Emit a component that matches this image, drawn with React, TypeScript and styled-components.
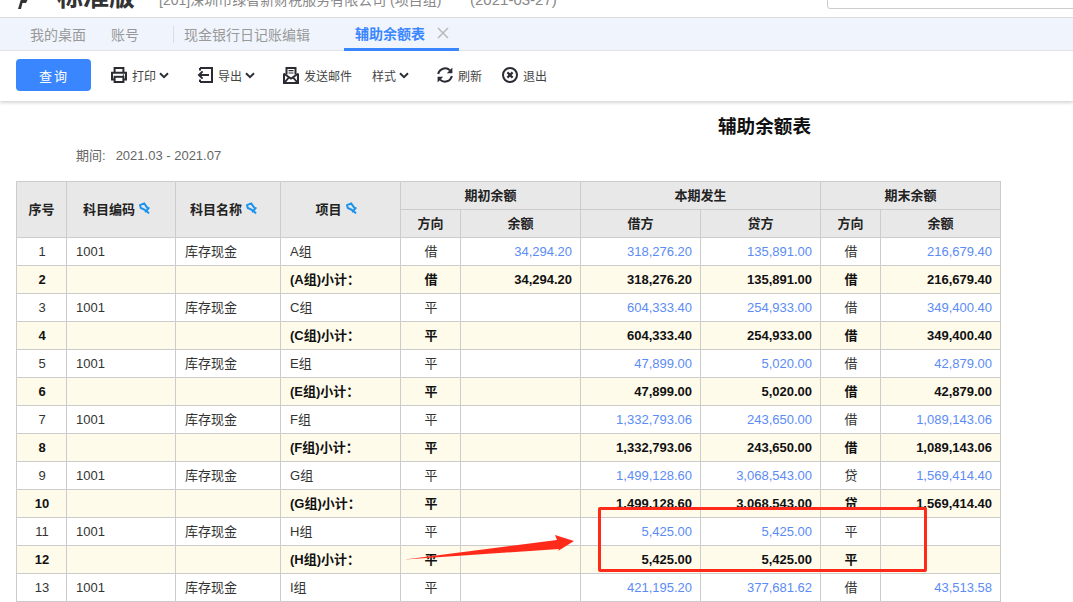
import { FC, ReactNode } from "react";
import styled, { createGlobalStyle } from "styled-components";

const FONT = `"Liberation Sans", "Noto Sans CJK SC", sans-serif`;

interface IRow {
  group: string;
  dir: string;
  open: string;
  debit: string;
  credit: string;
  endDir: string;
  end: string;
}

const ROWS: IRow[] = [
  { group: "A", dir: "借", open: "34,294.20", debit: "318,276.20", credit: "135,891.00", endDir: "借", end: "216,679.40" },
  { group: "C", dir: "平", open: "", debit: "604,333.40", credit: "254,933.00", endDir: "借", end: "349,400.40" },
  { group: "E", dir: "平", open: "", debit: "47,899.00", credit: "5,020.00", endDir: "借", end: "42,879.00" },
  { group: "F", dir: "平", open: "", debit: "1,332,793.06", credit: "243,650.00", endDir: "借", end: "1,089,143.06" },
  { group: "G", dir: "平", open: "", debit: "1,499,128.60", credit: "3,068,543.00", endDir: "贷", end: "1,569,414.40" },
  { group: "H", dir: "平", open: "", debit: "5,425.00", credit: "5,425.00", endDir: "平", end: "" },
];

const COL_WIDTHS = [50, 109, 105, 120, 60, 120, 120, 120, 60, 120];

const Chevron = () => (
  <svg width="10" height="7" viewBox="0 0 10 7" fill="none">
    <path d="M1 1.2 5 5.2 9 1.2" stroke="#2b3038" strokeWidth="2" />
  </svg>
);

const PrintIcon = () => (
  <svg width="16" height="16" viewBox="0 0 16 16" fill="none" stroke="#2b2b33" strokeWidth="2">
    <path d="M3.6 6V1h8.8v5" />
    <path d="M3.5 12.5H1V5.8h14v6.7h-2.5" />
    <rect x="3.6" y="9.8" width="8.8" height="5.2" fill="#fff" />
    <circle cx="12.4" cy="8" r="0.8" fill="#2b2b33" stroke="none" />
  </svg>
);

const ExportIcon = () => (
  <svg width="16" height="16" viewBox="0 0 16 16" fill="none" stroke="#2b2b33" strokeWidth="2">
    <path d="M3 1h12v14H3M3 12.4V15M3 1v2.6" />
    <path d="M12 8H2M5.6 4.4 2 8l3.6 3.6" />
  </svg>
);

const MailIcon = () => (
  <svg width="16" height="17" viewBox="0 0 16 17" fill="none" stroke="#2b2b33" strokeWidth="2">
    <path d="M3.5 7.5V1h9v6.5" />
    <path d="M5.5 3.7h5M5.5 6h5" strokeWidth="1.2" />
    <path d="M1 6.5V16h14V6.5" />
    <path d="M1 6.8 8 11.6l7-4.8M1.4 15.6 6 10.4M14.6 15.6 10 10.4" strokeWidth="1.8" />
  </svg>
);

const RefreshIcon = () => (
  <svg width="16" height="18" viewBox="0 0 16 18" fill="none" stroke="#2b2b33" strokeWidth="2">
    <path d="M1.2 8A7 7 0 0 1 13 4.4" />
    <path d="M14.8 10A7 7 0 0 1 3 13.6" />
    <path d="M15.4 1.6v5.6H9.8z" fill="#2b2b33" stroke="none" />
    <path d="M.6 16.4v-5.6h5.6z" fill="#2b2b33" stroke="none" />
  </svg>
);

const QuitIcon = () => (
  <svg width="16" height="16" viewBox="0 0 16 16" fill="none" stroke="#2b2b33">
    <circle cx="8" cy="8" r="7" strokeWidth="2" />
    <path d="M5.4 5.4l5.2 5.2M10.6 5.4l-5.2 5.2" strokeWidth="2.2" />
  </svg>
);

const PinIcon = () => (
  <svg width="11" height="12" viewBox="0 0 11 12" fill="none" stroke="#1c93ec" strokeWidth="2">
    <path d="M1 3.2 5.2 1.4l3 4.2 1.4.6-2.8 3.2-1-1.6L1.8 6z" />
    <path d="M7.6 9 10 11.4" />
  </svg>
);

const ToolItem: FC<{ icon?: ReactNode; label: string; menu?: boolean }> = ({ icon, label, menu }) => (
  <Tool $menu={menu}>
    {icon}
    <span>{label}</span>
    {menu && <Chevron />}
  </Tool>
);

const DataRows: FC<{ row: IRow; index: number }> = ({ row, index }) => (
  <>
    <tr>
      <Td $align="center">{index * 2 + 1}</Td>
      <Td>1001</Td>
      <Td $cjk>库存现金</Td>
      <Td $cjk>{row.group}组</Td>
      <Td $cjk $align="center">{row.dir}</Td>
      <Td $align="right" $link>{row.open}</Td>
      <Td $align="right" $link>{row.debit}</Td>
      <Td $align="right" $link>{row.credit}</Td>
      <Td $cjk $align="center">{row.endDir}</Td>
      <Td $align="right" $link>{row.end}</Td>
    </tr>
    <SubtotalRow>
      <Td $align="center">{index * 2 + 2}</Td>
      <Td />
      <Td />
      <Td $cjk>({row.group}组)小计：</Td>
      <Td $cjk $align="center">{row.dir}</Td>
      <Td $align="right">{row.open}</Td>
      <Td $align="right">{row.debit}</Td>
      <Td $align="right">{row.credit}</Td>
      <Td $cjk $align="center">{row.endDir}</Td>
      <Td $align="right">{row.end}</Td>
    </SubtotalRow>
  </>
);

const App: FC = () => {
  return (
    <Page>
      <GlobalStyle />
      <TopBar>
        <Logo width="10" height="10" viewBox="0 0 10 10">
          <path d="M3 0h7L8 4H4.5L3 10H0z" fill="#333" />
        </Logo>
        <Brand>标准版</Brand>
        <Company>[201]深圳市绿智新财税服务有限公司 (项目组)</Company>
        <DateText>(2021-03-27)</DateText>
        <SearchBox />
      </TopBar>

      <Tabs>
        <Tab $tail={14}>我的桌面</Tab>
        <Tab $tail={34}>账号</Tab>
        <Tab $tail={34}>现金银行日记账编辑</Tab>
        <Tab $active $tail={10}>
          辅助余额表
          <TabClose viewBox="0 0 12 12">
            <path d="M1 1l10 10M11 1 1 11" stroke="#bbb" strokeWidth="1.6" />
          </TabClose>
        </Tab>
      </Tabs>

      <Toolbar>
        <QueryButton>查询</QueryButton>
        <ToolItem icon={<PrintIcon />} label="打印" menu />
        <ToolItem icon={<ExportIcon />} label="导出" menu />
        <ToolItem icon={<MailIcon />} label="发送邮件" />
        <ToolItem label="样式" menu />
        <ToolItem icon={<RefreshIcon />} label="刷新" />
        <ToolItem icon={<QuitIcon />} label="退出" />
      </Toolbar>

      <Report>
        <Title>辅助余额表</Title>
        <Period>
          <span>期间:</span>
          <span>2021.03 - 2021.07</span>
        </Period>
        <Table>
          <colgroup>
            {COL_WIDTHS.map((w, i) => (
              <col key={i} width={w} />
            ))}
          </colgroup>
          <thead>
            <tr>
              <Th rowSpan={2}>序号</Th>
              <Th rowSpan={2}>
                <HeadLabel>科目编码<PinIcon /></HeadLabel>
              </Th>
              <Th rowSpan={2}>
                <HeadLabel>科目名称<PinIcon /></HeadLabel>
              </Th>
              <Th rowSpan={2}>
                <HeadLabel>项目<PinIcon /></HeadLabel>
              </Th>
              <Th colSpan={2}>期初余额</Th>
              <Th colSpan={2}>本期发生</Th>
              <Th colSpan={2}>期末余额</Th>
            </tr>
            <tr>
              <Th>方向</Th>
              <Th>余额</Th>
              <Th>借方</Th>
              <Th>贷方</Th>
              <Th>方向</Th>
              <Th>余额</Th>
            </tr>
          </thead>
          <tbody>
            {ROWS.map((row, i) => (
              <DataRows key={row.group} row={row} index={i} />
            ))}
            <tr>
              <Td $align="center">13</Td>
              <Td>1001</Td>
              <Td $cjk>库存现金</Td>
              <Td $cjk>I组</Td>
              <Td $cjk $align="center">平</Td>
              <Td $align="right" $link></Td>
              <Td $align="right" $link>421,195.20</Td>
              <Td $align="right" $link>377,681.62</Td>
              <Td $cjk $align="center">借</Td>
              <Td $align="right" $link>43,513.58</Td>
            </tr>
          </tbody>
        </Table>
      </Report>

      {/* 截图上的红色标注 */}
      <MarkBox />
      <MarkArrow width="172" height="28" viewBox="0 0 172 28">
        <path d="M0 25.5 152 6 150 1 169 7 153 17 154 15z" fill="#ff2a1a" />
      </MarkArrow>
    </Page>
  );
};

const GlobalStyle = createGlobalStyle`
  html, body {
    margin: 0;
    padding: 0;
    background: #fff;
    overflow: hidden;
  }
  * {
    box-sizing: border-box;
  }
`;

const Page = styled.div`
  position: relative;
  width: 1073px;
  height: 602px;
  overflow: hidden;
  font-family: ${FONT};
  font-size: 13px;
  color: #333;
`;

const TopBar = styled.div`
  display: flex;
  align-items: flex-end;
  height: 18px;
  padding-left: 18px;
  border-bottom: 1px solid #dcdcdc;
  overflow: hidden;
  background: #fff;
`;

const Logo = styled.svg`
  flex: none;
  margin-bottom: 8px;
`;

const Brand = styled.div`
  flex: none;
  margin: 0 24px 5px 29px;
  font-size: 26px;
  line-height: 30px;
  font-weight: 700;
  color: #333;
`;

const Company = styled.div`
  flex: none;
  width: 311px;
  margin-bottom: 7px;
  font-size: 14px;
  line-height: 20px;
  color: #888;
  white-space: nowrap;
`;

const DateText = styled.div`
  flex: none;
  margin-bottom: 7px;
  font-size: 15px;
  line-height: 20px;
  color: #888;
`;

const SearchBox = styled.div`
  flex: none;
  width: 266px;
  height: 24px;
  margin: 0 -20px 8px auto;
  border: 1px solid #ccc;
  border-radius: 3px;
`;

const Tabs = styled.div`
  display: flex;
  align-items: stretch;
  height: 33px;
  padding-left: 19px;
  background: #f0f5fd;
  border-bottom: 1px solid #e2e6ec;
`;

const Tab = styled.div<{ $active?: boolean; $tail: number }>`
  position: relative;
  display: flex;
  align-items: center;
  height: ${(p) => (p.$active ? "33px" : "32px")};
  padding: 0 ${(p) => p.$tail}px 0 11px;
  font-size: 14px;
  font-weight: ${(p) => (p.$active ? 700 : 400)};
  color: ${(p) => (p.$active ? "#3a86ff" : "#999")};
  border-bottom: ${(p) => (p.$active ? "3px solid #3a86ff" : "0")};

  & + &::before {
    content: "";
    position: absolute;
    left: 0;
    top: 8px;
    width: 1px;
    height: 17px;
    background: #d8dde6;
  }
`;

const TabClose = styled.svg`
  width: 12px;
  height: 12px;
  margin-left: 12px;
`;

const Toolbar = styled.div`
  display: flex;
  align-items: center;
  gap: 20px;
  height: 50px;
  padding: 0 0 2px 16px;
  background: #fff;
  box-shadow: 0 2px 3px rgba(0, 0, 0, 0.16);
`;

const QueryButton = styled.button`
  width: 75px;
  height: 32px;
  padding: 0 0 0 1px;
  border: 0;
  border-radius: 4px;
  background: #3a86ff;
  color: #fff;
  font-family: ${FONT};
  font-size: 13px;
  letter-spacing: 2px;
`;

const Tool = styled.div<{ $menu?: boolean }>`
  display: flex;
  align-items: center;
  gap: 5px;
  margin-right: ${(p) => (p.$menu ? "8px" : "0")};
  font-size: 12px;
  color: #444;

  svg:last-child {
    margin-left: -2px;
  }
  svg:first-child {
    margin-left: 0;
  }
`;

const Report = styled.div`
  padding: 0 0 0 16px;
`;

const Title = styled.div`
  padding: 14px 0 0 702px;
  height: 39px;
  font-size: 18.6px;
  line-height: 24px;
  font-weight: 700;
  color: #111;
`;

const Period = styled.div`
  display: flex;
  gap: 10px;
  padding-left: 60px;
  height: 41px;
  padding-top: 8px;
  font-size: 13px;
  line-height: 16px;
  color: #666;
`;

const Table = styled.table`
  width: 985px;
  table-layout: fixed;
  border-collapse: collapse;
  font-size: 13px;
`;

const Th = styled.th`
  height: 28px;
  padding: 0 0 3px;
  border: 1px solid #ccc;
  background: #e8e8e8;
  font-weight: 700;
  font-size: 13px;
  color: #222;
  text-align: center;
`;

const HeadLabel = styled.span`
  display: inline-flex;
  align-items: center;
  gap: 4px;
  padding-right: 9px;
`;

const Td = styled.td<{ $align?: string; $link?: boolean; $cjk?: boolean }>`
  height: 28px;
  padding: 0 8px ${(p) => (p.$cjk ? "3px" : "0")} 9px;
  border: 1px solid #ccc;
  text-align: ${(p) => p.$align || "left"};
  color: ${(p) => (p.$link ? "#5b8cf5" : "inherit")};
  white-space: nowrap;
  overflow: hidden;
`;

const SubtotalRow = styled.tr`
  background: #fffbeb;
  font-weight: 700;
  color: #111;
`;

const MarkBox = styled.div`
  position: absolute;
  left: 598px;
  top: 507px;
  width: 329px;
  height: 65px;
  border: 3px solid #ff2a1a;
  border-radius: 2px;
`;

const MarkArrow = styled.svg`
  position: absolute;
  left: 405px;
  top: 534px;
`;

export default App;
